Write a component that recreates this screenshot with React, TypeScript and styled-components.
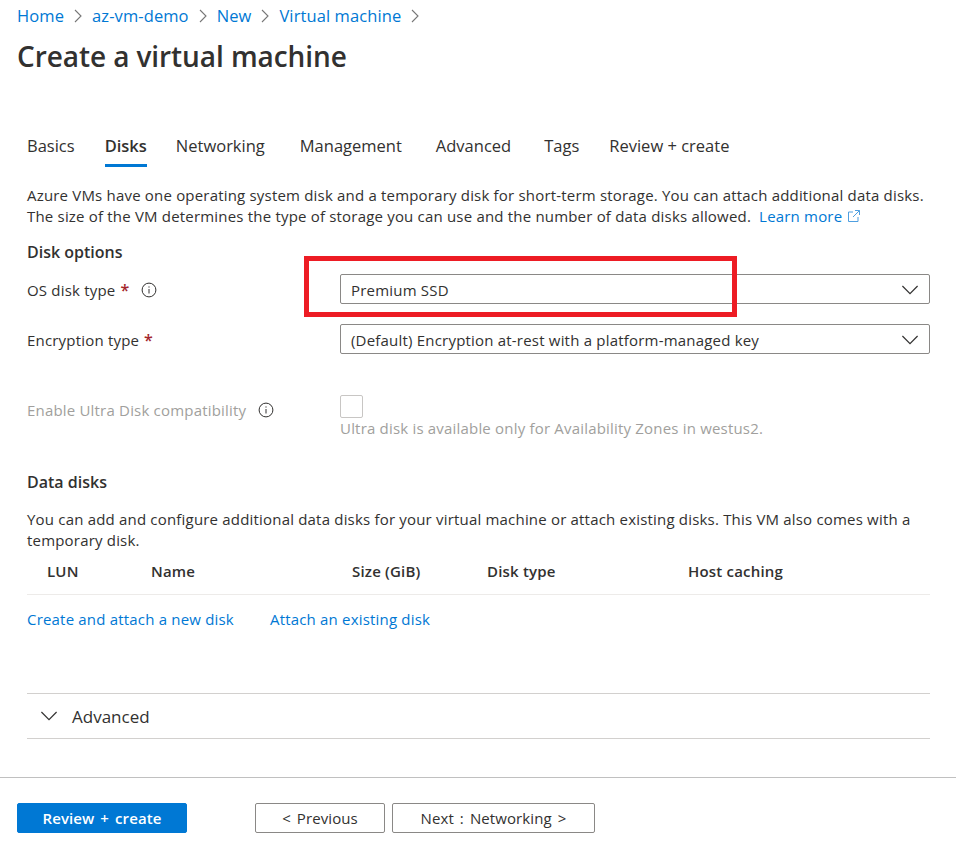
import { Fragment } from 'react';
import styled, { createGlobalStyle } from 'styled-components';

const GlobalStyle = createGlobalStyle`
    html, body {
        margin: 0;
        padding: 0;
        background: #fff;
    }
    body {
        font-family: "Open Sans", "Noto Sans", sans-serif;
        color: #323130;
    }
`;

const Page = styled.div`
    position: relative;
    width: 956px;
    height: 856px;
    overflow: hidden;
    background: #fff;
`;

const Header = styled.header`
    padding: 5px 0 0 17px;
`;

const Breadcrumbs = styled.nav`
    display: flex;
    align-items: center;
    height: 22px;
`;

const Crumb = styled.a`
    color: #0078d4;
    font-size: 16.5px;
    line-height: 22px;
    letter-spacing: 0.1px;
`;

const CrumbChevron = styled.svg`
    width: 10px;
    height: 14px;
    margin: 0 9px;
    fill: none;
    stroke: #777;
    stroke-width: 1.1;
`;

const Title = styled.h1`
    margin: 9px 0 0;
    font-size: 28px;
    line-height: 40px;
    font-weight: 600;
    letter-spacing: -0.08px;
    color: #323130;
`;

const Content = styled.main`
    padding: 0 26px 0 27px;
`;

const Tabs = styled.div`
    display: flex;
    height: 40px;
    margin-top: 51px;
`;

const Tab = styled.div<{ $active?: boolean; $gap: number }>`
    height: 40px;
    margin-right: ${props => props.$gap}px;
    box-sizing: border-box;
    font-size: 16.5px;
    line-height: 38px;
    font-weight: ${props => (props.$active ? 600 : 400)};
    border-bottom: 3px solid ${props => (props.$active ? '#0078d4' : 'transparent')};
`;

const Paragraph = styled.p<{ $top: number }>`
    margin: ${props => props.$top}px 0 0;
    font-size: 15px;
    line-height: 21px;
    letter-spacing: 0.19px;
    color: #323130;
`;

const TextLink = styled.a`
    color: #0078d4;
`;

const LearnMore = styled(TextLink)`
    margin-left: 4px;
`;

const ExternalIcon = styled.svg`
    width: 14px;
    height: 14px;
    margin-left: 5px;
    vertical-align: -1px;
    fill: none;
    stroke: #4f9fe0;
    stroke-width: 1;
`;

const SectionTitle = styled.h2<{ $top: number }>`
    margin: ${props => props.$top}px 0 0;
    font-size: 16px;
    line-height: 22px;
    font-weight: 600;
`;

const FormRow = styled.div<{ $top: number }>`
    display: grid;
    grid-template-columns: 313px 590px;
    align-items: center;
    margin-top: ${props => props.$top}px;
`;

const TopAlignedRow = styled(FormRow)`
    align-items: start;
`;

const Label = styled.div<{ $disabled?: boolean }>`
    display: flex;
    align-items: center;
    padding-top: ${props => (props.$disabled ? 5 : 2)}px;
    font-size: 15px;
    letter-spacing: 0.19px;
    line-height: 20px;
    color: ${props => (props.$disabled ? '#a19f9d' : '#323130')};
`;

const Required = styled.span`
    margin-left: 5px;
    color: #a4262c;
    font-weight: 600;
    font-size: 16px;
`;

const InfoIcon = styled.svg`
    width: 16px;
    height: 16px;
    margin-left: 12px;
    fill: none;
    stroke: #323130;
    stroke-width: 1;
`;

const Select = styled.div`
    display: flex;
    align-items: center;
    justify-content: space-between;
    box-sizing: border-box;
    height: 30px;
    padding: 1px 11px 0 10px;
    border: 1px solid #8a8886;
    border-radius: 2px;
    font-size: 15px;
    letter-spacing: 0.2px;
`;

const Chevron = styled.svg`
    width: 16px;
    height: 16px;
    flex: none;
    fill: none;
    stroke: #323130;
    stroke-width: 1.2;
`;

const Checkbox = styled.div`
    box-sizing: border-box;
    width: 23px;
    height: 23px;
    border: 1px solid #c8c6c4;
    border-radius: 2px;
`;

const Hint = styled.div`
    font-size: 15px;
    line-height: 21px;
    letter-spacing: 0.19px;
    color: #a19f9d;
`;

const DiskHeader = styled.div`
    display: grid;
    grid-template-columns: 104px 201px 135px 201px 1fr;
    height: 44px;
    padding: 0 0 4px 20px;
    box-sizing: border-box;
    align-items: center;
    border-bottom: 1px solid #edebe9;
    font-size: 15px;
    font-weight: 600;
    letter-spacing: 0.19px;
`;

const Links = styled.div`
    display: flex;
    gap: 36px;
    margin-top: 13px;
    font-size: 15px;
    line-height: 22px;
    letter-spacing: 0.19px;
`;

const Accordion = styled.div`
    display: flex;
    align-items: center;
    box-sizing: border-box;
    height: 46px;
    margin-top: 63px;
    padding-left: 14px;
    border-top: 1px solid #d2d0ce;
    border-bottom: 1px solid #d2d0ce;
    font-size: 17px;
    font-weight: 500;
`;

const AccordionLabel = styled.span`
    margin-left: 15px;
`;

const Footer = styled.footer`
    display: flex;
    align-items: flex-start;
    box-sizing: border-box;
    height: 79px;
    margin-top: 38px;
    padding: 25px 0 0 17px;
    border-top: 1px solid #c0c0c0;
`;

const Button = styled.button<{ $width: number; $primary?: boolean; $gap: number }>`
    box-sizing: border-box;
    width: ${props => props.$width}px;
    height: 30px;
    margin-right: ${props => props.$gap}px;
    padding: 0;
    border: 1px solid ${props => (props.$primary ? '#0078d4' : '#8a8886')};
    border-radius: 2px;
    background: ${props => (props.$primary ? '#0078d4' : '#fff')};
    color: ${props => (props.$primary ? '#fff' : '#323130')};
    font-family: inherit;
    font-size: 15px;
    font-weight: ${props => (props.$primary ? 600 : 500)};
    letter-spacing: 0.1px;
    word-spacing: 2px;
`;

const Highlight = styled.div`
    position: absolute;
    left: 304px;
    top: 256px;
    box-sizing: border-box;
    width: 433px;
    height: 61px;
    border: 5px solid #ed1c24;
    pointer-events: none;
`;

const crumbs = ['Home', 'az-vm-demo', 'New', 'Virtual machine'];

const tabs = [
    { text: 'Basics', gap: 30 },
    { text: 'Disks', gap: 29, active: true },
    { text: 'Networking', gap: 35 },
    { text: 'Management', gap: 34 },
    { text: 'Advanced', gap: 33 },
    { text: 'Tags', gap: 30 },
    { text: 'Review + create', gap: 0 }
];

const diskColumns = ['LUN', 'Name', 'Size (GiB)', 'Disk type', 'Host caching'];

const Info = () => (
    <InfoIcon viewBox="0 0 16 16">
        <circle cx="8" cy="8" r="6.9" />
        <path d="M8 7v4.5M8 4.4v1.2" />
    </InfoIcon>
);

const Caret = () => (
    <Chevron viewBox="0 0 16 16">
        <path d="M0.4 4L8 11.6 15.6 4" />
    </Chevron>
);

export default function App() {
    return (
        <Page>
            <GlobalStyle />
            <Header>
                <Breadcrumbs>
                    {crumbs.map((crumb) => (
                        <Fragment key={crumb}>
                            <Crumb>{crumb}</Crumb>
                            <CrumbChevron viewBox="0 0 10 14">
                                <path d="M2 1l6 6-6 6" />
                            </CrumbChevron>
                        </Fragment>
                    ))}
                </Breadcrumbs>
                <Title>Create a virtual machine</Title>
            </Header>
            <Content>
                <Tabs>
                    {tabs.map((tab) => (
                        <Tab key={tab.text} $active={tab.active} $gap={tab.gap}>{tab.text}</Tab>
                    ))}
                </Tabs>
                <Paragraph $top={18}>
                    Azure VMs have one operating system disk and a temporary disk for short-term storage. You can attach additional data disks.
                    <br />
                    The size of the VM determines the type of storage you can use and the number of data disks allowed.{' '}
                    <LearnMore>
                        Learn more
                        <ExternalIcon viewBox="0 0 14 14">
                            <path d="M11 8v4.5H1.5V3H6M8 1.5h4.5V6M12.5 1.5L6 8" />
                        </ExternalIcon>
                    </LearnMore>
                </Paragraph>
                <SectionTitle $top={14}>Disk options</SectionTitle>
                <FormRow $top={11}>
                    <Label>
                        OS disk type<Required>*</Required>
                        <Info />
                    </Label>
                    <Select>
                        Premium SSD
                        <Caret />
                    </Select>
                </FormRow>
                <FormRow $top={20}>
                    <Label>
                        Encryption type<Required>*</Required>
                    </Label>
                    <Select>
                        (Default) Encryption at-rest with a platform-managed key
                        <Caret />
                    </Select>
                </FormRow>
                <TopAlignedRow $top={41}>
                    <Label $disabled>
                        Enable Ultra Disk compatibility
                        <Info />
                    </Label>
                    <div>
                        <Checkbox />
                        <Hint>Ultra disk is available only for Availability Zones in westus2.</Hint>
                    </div>
                </TopAlignedRow>
                <SectionTitle $top={32}>Data disks</SectionTitle>
                <Paragraph $top={16}>
                    You can add and configure additional data disks for your virtual machine or attach existing disks. This VM also comes with a temporary disk.
                </Paragraph>
                <DiskHeader>
                    {diskColumns.map((column) => (
                        <span key={column}>{column}</span>
                    ))}
                </DiskHeader>
                <Links>
                    <TextLink>Create and attach a new disk</TextLink>
                    <TextLink>Attach an existing disk</TextLink>
                </Links>
                <Accordion>
                    <Caret />
                    <AccordionLabel>Advanced</AccordionLabel>
                </Accordion>
            </Content>
            <Footer>
                <Button $primary $width={170} $gap={68}>Review + create</Button>
                <Button $width={130} $gap={7}>&lt; Previous</Button>
                <Button $width={203} $gap={0}>Next : Networking &gt;</Button>
            </Footer>
            <Highlight />
        </Page>
    );
}
